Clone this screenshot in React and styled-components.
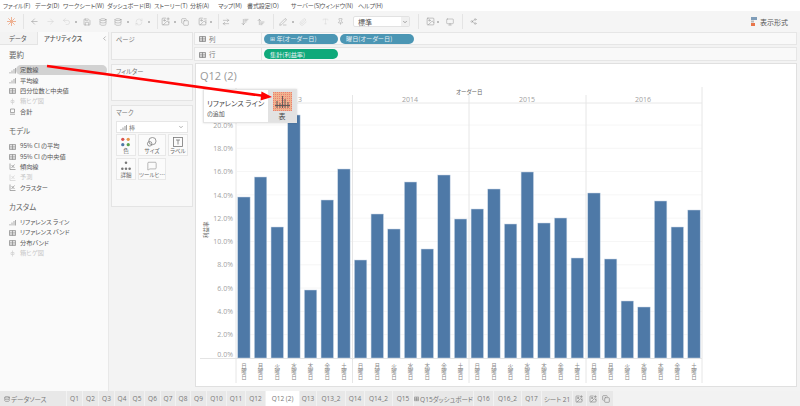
import React from 'react'
import styled, { createGlobalStyle } from 'styled-components'
import {
  ArrowLeft, ArrowRight, Undo2, Save, Database, RefreshCw, ImagePlus, Copy, ImageMinus,
  ArrowRightLeft, ArrowDownWideNarrow, ArrowUpWideNarrow, PenLine, Paperclip, Type, Pin,
  Image, Monitor, Share2, MessageSquare, ChevronLeft, ChevronDown,
} from 'lucide-react'

const menus = ['ファイル(F)', 'データ(D)', 'ワークシート(W)', 'ダッシュボード(B)', 'ストーリー(T)', '分析(A)', 'マップ(M)', '書式設定(O)', 'サーバー(S)', 'ウィンドウ(N)', 'ヘルプ(H)']
const menuLefts = [3, 35, 63, 107, 154, 190, 218, 247, 291, 320, 358]

const tools = [
  { kind: 'logo', c: 11, w: 9 }, { kind: 'sep', c: 23, w: 1 },
  { I: ArrowLeft, c: 34, w: 9 }, { I: ArrowRight, c: 50, w: 9, pale: true }, { I: Undo2, c: 66, w: 9, pale: true },
  { kind: 'dot', c: 76, w: 2 }, { I: Save, c: 87, w: 8 }, { I: Database, c: 103, w: 8 }, { I: Database, c: 118, w: 8 },
  { kind: 'dot', c: 128, w: 2 }, { I: RefreshCw, c: 139, w: 8, pale: true }, { kind: 'dot', c: 149, w: 2 },
  { kind: 'sep', c: 157, w: 1 }, { I: ImagePlus, c: 165, w: 9 }, { kind: 'dot', c: 175, w: 2 }, { I: Copy, c: 185, w: 8 },
  { I: ImageMinus, c: 202, w: 9 }, { kind: 'dot', c: 211, w: 2 }, { kind: 'sep', c: 218, w: 1 },
  { I: ArrowRightLeft, c: 226, w: 8 }, { I: ArrowDownWideNarrow, c: 245, w: 8 }, { I: ArrowUpWideNarrow, c: 261, w: 8 },
  { kind: 'sep', c: 273, w: 1 }, { I: PenLine, c: 283, w: 8 }, { kind: 'dot', c: 293, w: 2 },
  { I: Paperclip, c: 303, w: 8, pale: true }, { I: Type, c: 325, w: 7, pale: true }, { I: Pin, c: 340, w: 7 },
]
const tools2 = [
  { kind: 'sep', c: 418, w: 1 }, { I: Image, c: 430, w: 9 }, { kind: 'dot', c: 438, w: 2 }, { I: Monitor, c: 450, w: 8 },
  { kind: 'sep', c: 462, w: 1 }, { I: Share2, c: 473, w: 7 },
]

const summary = [['bars', '定数線', 'on'], ['bars', '平均線'], ['grid', '四分位数と中央値'], ['box', '箱ヒゲ図', 'off'], ['sum', '合計']]
const model = [['grid', '95% CI の平均'], ['grid', '95% CI の中央値'], ['trend', '傾向線'], ['trend', '予測', 'off'], ['trend', 'クラスター']]
const custom = [['bars', 'リファレンス ライン'], ['grid', 'リファレンス バンド'], ['grid', '分布バンド'], ['box', '箱ヒゲ図', 'off']]

const tabs = [['データソース', 67, 'db'], ['Q1', 16], ['Q2', 16], ['Q3', 16], ['Q4', 15], ['Q5', 15], ['Q6', 16], ['Q7', 15], ['Q8', 15], ['Q9', 16], ['Q10', 20], ['Q11', 19], ['Q12', 20], ['Q12 (2)', 34], ['Q13', 17], ['Q13_2', 29], ['Q14', 19], ['Q14_2', 28], ['Q15', 21], ['Q15ダッシュボード', 60, 'dash'], ['Q16', 20], ['Q16_2', 28], ['Q17', 20], ['シート 21', 31]]

const barTops = [197, 177, 227, 115, 290, 200, 169, 260, 214, 229, 182, 249, 175, 219, 209, 189, 224, 172, 223, 218, 258, 193, 259, 301, 307, 201, 227, 210]
const days = ['日曜日', '月曜日', '火曜日', '水曜日', '木曜日', '金曜日', '土曜日']
const zero = 358
const perPct = 11.65
const paneLines = [236, 352.5, 469, 586, 702]

export default function App() {
  return (
    <Page>
      <GlobalStyle />
      <MenuBar>
        {menus.map((m, i) => <MenuItem key={m} $w={(menuLefts[i + 1] || 400) - menuLefts[i]}>{m}</MenuItem>)}
      </MenuBar>
      <Toolbar>
        <ToolRun items={tools} start={0} />
        <Combo>標準<ComboBtn><ChevronDown size={6} /></ComboBtn></Combo>
        <ToolRun items={tools2} start={410} />
        <ShowMe>
          <svg width="7" height="9" viewBox="0 0 7 9"><rect width="6" height="3" fill="#7f9db9" /><rect y="3.5" width="3" height="2" fill="#bbb" /><rect y="6" width="4" height="3" fill="#e8764b" /></svg>
          表示形式
        </ShowMe>
      </Toolbar>
      <Main>
        <SidePane>
          <PaneTabs>
            <PaneTab>データ</PaneTab>
            <PaneTab $active>アナリティクス<ChevronLeft size={7} color="#888" /></PaneTab>
          </PaneTabs>
          <ListSection title="要約" rows={summary} first />
          <ListSection title="モデル" rows={model} />
          <ListSection title="カスタム" rows={custom} />
        </SidePane>
        <MidColumn>
          <Card $h={28}><CardTitle>ページ</CardTitle></Card>
          <Card $h={37}><CardTitle>フィルター</CardTitle></Card>
          <Card $h={102}>
            <CardTitle>マーク</CardTitle>
            <MarkSelect>
              <span><MiniIcon kind="bars" /> 棒</span>
              <ChevronDown size={6} color="#666" />
            </MarkSelect>
            <MarkGrid>
              <MarkButton>
                <svg width="11" height="11" viewBox="0 0 11 11">
                  <circle cx="2.5" cy="2.5" r="1.8" fill="#d9534f" /><circle cx="8.5" cy="2.5" r="1.8" fill="#e8964b" />
                  <circle cx="2.5" cy="8.5" r="1.8" fill="#4e79a7" /><circle cx="8.5" cy="8.5" r="1.8" fill="#59a14f" />
                </svg>
                色
              </MarkButton>
              <MarkButton>
                <svg width="11" height="11" viewBox="0 0 11 11" fill="none" stroke="#777" strokeWidth=".8">
                  <circle cx="6.5" cy="4.5" r="4" /><circle cx="3.5" cy="7.5" r="2.5" />
                </svg>
                サイズ
              </MarkButton>
              <MarkButton>
                <svg width="10" height="10" viewBox="0 0 10 10" fill="none" stroke="#777" strokeWidth=".8">
                  <rect x=".5" y=".5" width="9" height="9" /><path d="M3 3h4M5 3v4.5" />
                </svg>
                ラベル
              </MarkButton>
              <MarkButton>
                <svg width="12" height="11" viewBox="0 0 12 11" fill="#777">
                  <circle cx="6" cy="2" r="1.4" /><circle cx="2" cy="8.5" r="1.4" /><circle cx="6" cy="8.5" r="1.4" /><circle cx="10" cy="8.5" r="1.4" />
                </svg>
                詳細
              </MarkButton>
              <MarkButton>
                <MessageSquare size={10} color="#777" strokeWidth={1.2} />
                ツールヒ…
              </MarkButton>
            </MarkGrid>
          </Card>
        </MidColumn>
        <ViewColumn>
          <Shelf $h={13}>
            <ShelfLabel><MiniIcon kind="grid" /> 列</ShelfLabel>
            <Pill $c="#4b96b4">⊞ 年(オーダー日)</Pill>
            <Pill $c="#4b96b4">曜日(オーダー日)</Pill>
          </Shelf>
          <Shelf $h={14}>
            <ShelfLabel><MiniIcon kind="grid" /> 行</ShelfLabel>
            <Pill $c="#0fa97a">集計(利益率)</Pill>
          </Shelf>
          <ChartCard>
            <ChartTitle>Q12 (2)</ChartTitle>
            <Chart />
            <Popover>
              <PopoverText>
                <strong>リファレンス ライン</strong>
                <small>の追加</small>
              </PopoverText>
              <PopoverSide>
                <RefIcon />
                表
              </PopoverSide>
            </Popover>
          </ChartCard>
        </ViewColumn>
      </Main>
      <TabBar>
        {tabs.map(([t, w, icon]) => (
          <SheetTab key={t} $w={w} $active={t === 'Q12 (2)'} $lead={t === 'データソース'}>
            {icon === 'db' && <Database size={6} color="#777" />}
            {icon === 'dash' && <MiniIcon kind="grid" />}
            {t}
          </SheetTab>
        ))}
        <TabAdd><ImagePlus size={8} /></TabAdd>
        <TabAdd><ImagePlus size={8} /></TabAdd>
        <TabAdd><Copy size={8} /></TabAdd>
      </TabBar>
      <ArrowLayer width="800" height="406" viewBox="0 0 800 406">
        <line x1="47" y1="66" x2="263" y2="95.8" stroke="#f00" strokeWidth="2.6" />
        <polygon points="272,97 261.5,91.5 260.5,100.5" fill="#f00" />
      </ArrowLayer>
    </Page>
  )
}

const ToolRun = ({ items, start }) => (
  <>
    {items.map((t, i) => {
      const prev = items[i - 1]
      const left = t.c - t.w / 2 - (prev ? prev.c + prev.w / 2 : start)
      if (t.kind === 'sep') return <ToolSep key={i} $ml={left} />
      if (t.kind === 'dot') return <ToolDot key={i} $ml={left} />
      if (t.kind === 'logo') {
        return (
          <ToolSlot key={i} $ml={left} $w={t.w}>
            <svg width="9" height="9" viewBox="0 0 10 10" stroke="#eeb193" strokeWidth="1.1">
              <path d="M5 0v10M0 5h10M1.5 1.5l7 7M8.5 1.5l-7 7" />
            </svg>
          </ToolSlot>
        )
      }
      return (
        <ToolSlot key={i} $ml={left} $w={t.w} $pale={t.pale}>
          <t.I size={t.w} strokeWidth={1.3} />
        </ToolSlot>
      )
    })}
  </>
)

const ListSection = ({ title, rows, first }) => (
  <Section $first={first}>
    <SectionTitle>{title}</SectionTitle>
    {rows.map(([icon, label, state]) => (
      <ListRow key={label} $off={state === 'off'}>
        <MiniIcon kind={icon} />
        <ListLabel $on={state === 'on'} $off={state === 'off'}>{label}</ListLabel>
      </ListRow>
    ))}
  </Section>
)

const MiniIcon = ({ kind }) => {
  const shapes = {
    bars: <path d="M1 6.5V5M3 6.5V3.5M5 6.5V2M6.5 1v5.5" />,
    grid: <path d="M.5 1.5h6v5h-6zM.5 3.2h6M.5 5h6M3.5 1.5v5" />,
    box: <path d="M3.5 .5v6M2 2.5h3v2H2z" />,
    sum: <path d="M1.5 1h4v3.5h-4zM1 6.2h5" />,
    trend: <path d="M1 .5v6h5.5M2.5 5l3-3.5M2.5 2l3 3" />,
  }
  return (
    <svg width="7" height="7" viewBox="0 0 7 7" fill="none" stroke="currentColor" strokeWidth=".7">
      {shapes[kind]}
    </svg>
  )
}

const Chart = () => (
  <PlotSvg width="602" height="300" viewBox="195 86 602 300">
    {[2, 4, 6, 8, 10, 12, 14, 16, 18, 20].map(p => (
      <line key={p} x1="237" x2="702" y1={zero - p * perPct} y2={zero - p * perPct} stroke="#f6f6f6" strokeWidth="1" />
    ))}
    <line x1="236" x2="702" y1="103" y2="103" stroke="#e8e8e8" strokeWidth="1" />
    <line x1="200" x2="702" y1="358.5" y2="358.5" stroke="#e4e4e4" strokeWidth="1" />
    {paneLines.map((x, i) => (
      <line key={x} x1={x} x2={x} y1={i === 4 ? 87 : i === 0 ? 88 : 95} y2="383" stroke="#e6e6e6" strokeWidth="1" />
    ))}
    {barTops.map((top, i) => (
      <rect key={i} x={237.7 + 16.67 * i} y={top} width="12.4" height={zero - top} fill="#4e79a7" stroke="#c9d7e6" strokeWidth=".5" />
    ))}
    {[0, 2, 4, 6, 8, 10, 12, 14, 16, 18, 20].map(p => (
      <AxisText key={p} x="233" y={(p === 0 ? 354 : zero - p * perPct) + 2.6} textAnchor="end">{p}.0%</AxisText>
    ))}
    {[[294, 2013], [410, 2014], [527, 2015], [643, 2016]].map(([x, y]) => (
      <AxisText key={y} x={x} y="102" textAnchor="middle">{y}</AxisText>
    ))}
    <FieldText x="456" y="93.5">オーダー日</FieldText>
    <FieldText x="0" y="0" transform="translate(208 238) rotate(-90)">利益率</FieldText>
    {barTops.map((_, i) => (
      <DayText key={i} x={243.9 + 16.67 * i} y="363">{days[i % 7]}</DayText>
    ))}
  </PlotSvg>
)

const RefIcon = () => (
  <svg width="19" height="19" viewBox="0 0 19 19">
    <defs>
      <pattern id="speck" width="2" height="2" patternUnits="userSpaceOnUse">
        <rect width="2" height="2" fill="#efb48e" />
        <rect width="1" height="1" fill="#ec7f72" />
      </pattern>
    </defs>
    <rect width="19" height="19" fill="url(#speck)" />
    <path d="M2 13.5h15M4 9v7M7 11v5M9.5 4v12M12 7v9M15 10v6" stroke="#555" strokeWidth=".9" fill="none" />
  </svg>
)

const GlobalStyle = createGlobalStyle`
  html, body { margin: 0; padding: 0; background: #f3f3f3; }
  body {
    font-family: "Noto Sans CJK JP", "Open Sans", sans-serif;
    font-feature-settings: "palt";
    color: #555;
  }
`

const Page = styled.div`
  position: relative;
  width: 800px;
  height: 406px;
  display: flex;
  flex-direction: column;
  overflow: hidden;
  background: #f3f3f3;
`

const MenuBar = styled.div`
  height: 11px;
  flex: none;
  display: flex;
  padding-left: 3px;
  background: #fff;
`

const MenuItem = styled.div`
  width: ${p => p.$w}px;
  font-size: 6px;
  letter-spacing: -.1px;
  line-height: 12px;
  white-space: nowrap;
  color: #555;
`

const Toolbar = styled.div`
  height: 21px;
  flex: none;
  display: flex;
  align-items: center;
  background: #f5f5f5;
`

const ToolSlot = styled.div`
  width: ${p => p.$w}px;
  height: 10px;
  margin-left: ${p => p.$ml}px;
  display: flex;
  align-items: center;
  justify-content: center;
  flex: none;
  color: ${p => (p.$pale ? '#cfcfcf' : '#8a8a8a')};
`

const ToolSep = styled.div`
  width: 1px;
  height: 15px;
  margin-left: ${p => p.$ml}px;
  flex: none;
  background: #e4e4e4;
`

const ToolDot = styled.div`
  width: 2px;
  height: 2px;
  margin-left: ${p => p.$ml}px;
  flex: none;
  border-radius: 50%;
  background: #aaa;
`

const Combo = styled.div`
  width: 57px;
  height: 11px;
  margin-left: 9.5px;
  flex: none;
  display: flex;
  align-items: center;
  justify-content: space-between;
  box-sizing: border-box;
  padding-left: 4px;
  font-size: 7px;
  background: #fff;
  border: 1px solid #e2e2e2;
  border-radius: 2px;
`

const ComboBtn = styled.span`
  width: 8px;
  height: 100%;
  display: flex;
  align-items: center;
  justify-content: center;
  background: #f0f0f0;
`

const ShowMe = styled.div`
  margin-left: auto;
  margin-right: 12px;
  display: flex;
  align-items: center;
  gap: 2px;
  font-size: 7px;
  color: #555;
`

const Main = styled.div`
  flex: 1;
  min-height: 0;
  display: flex;
`

const SidePane = styled.div`
  width: 108px;
  flex: none;
  background: #fafafa;
  border-right: 1px solid #e8e8e8;
`

const PaneTabs = styled.div`
  display: flex;
  height: 13px;
`

const PaneTab = styled.div`
  width: ${p => (p.$active ? 70 : 38)}px;
  display: flex;
  align-items: center;
  justify-content: ${p => (p.$active ? 'space-between' : 'flex-start')};
  box-sizing: border-box;
  padding: 0 0 0 ${p => (p.$active ? 6 : 9)}px;
  font-size: 6.3px;
  color: #555;
  font-weight: ${p => (p.$active ? 500 : 400)};
  background: ${p => (p.$active ? '#fafafa' : '#f3f3f3')};
  border-bottom: ${p => (p.$active ? 'none' : '1px solid #e4e4e4')};
  border-right: ${p => (p.$active ? 'none' : '1px solid #e4e4e4')};
`

const Section = styled.div`
  padding-top: ${p => (p.$first ? 4 : 0)}px;
  margin-bottom: 8px;
`

const SectionTitle = styled.div`
  height: 12px;
  margin-bottom: 4px;
  padding-left: 9px;
  font-size: 7.5px;
  line-height: 12px;
  color: #666;
`

const ListRow = styled.div`
  height: 10.4px;
  display: flex;
  align-items: center;
  padding: 0 1px 0 9px;
  color: ${p => (p.$off ? '#d0d0d0' : '#888')};
`

const ListLabel = styled.span`
  flex: 1;
  height: 10px;
  padding-left: 4px;
  font-size: 6.2px;
  line-height: 10px;
  white-space: nowrap;
  color: ${p => (p.$off ? '#c8c8c8' : '#555')};
  background: ${p => (p.$on ? '#d2d2d2' : 'transparent')};
  border-radius: 5px;
`

const MidColumn = styled.div`
  width: 82px;
  flex: none;
  margin: 0 1px 0 2px;
  display: flex;
  flex-direction: column;
  gap: 4px;
`

const Card = styled.div`
  height: ${p => p.$h}px;
  box-sizing: border-box;
  padding: 2px 4px;
  background: #f8f8f8;
  border: 1px solid #e4e4e4;
`

const CardTitle = styled.div`
  font-size: 6.3px;
  line-height: 10px;
  color: #777;
`

const MarkSelect = styled.div`
  height: 10px;
  margin-top: 3px;
  display: flex;
  align-items: center;
  justify-content: space-between;
  padding: 0 3px;
  font-size: 6px;
  color: #777;
  background: #fff;
  border: 1px solid #e6e6e6;
  span { display: flex; align-items: center; gap: 2px; }
`

const MarkGrid = styled.div`
  margin-top: 1px;
  display: grid;
  grid-template-columns: repeat(3, 1fr);
  gap: 2px;
`

const MarkButton = styled.div`
  height: 22px;
  box-sizing: border-box;
  padding-top: 2px;
  display: flex;
  flex-direction: column;
  align-items: center;
  justify-content: space-between;
  font-size: 5.5px;
  line-height: 8px;
  white-space: nowrap;
  color: #666;
  background: #fbfbfb;
  border: 1px solid #e8e8e8;
`

const ViewColumn = styled.div`
  flex: 1;
  min-width: 0;
  margin: 0 3px 4px 0;
  display: flex;
  flex-direction: column;
  gap: 2px;
`

const Shelf = styled.div`
  height: ${p => p.$h}px;
  flex: none;
  box-sizing: border-box;
  display: flex;
  align-items: center;
  gap: 2px;
  background: #f9f9f9;
  border: 1px solid #e6e6e6;
`

const ShelfLabel = styled.div`
  width: 67px;
  height: 100%;
  display: flex;
  align-items: center;
  gap: 3px;
  padding-left: 4px;
  box-sizing: border-box;
  font-size: 6.5px;
  color: #777;
  border-right: 1px solid #e6e6e6;
`

const Pill = styled.div`
  width: 74px;
  height: 10px;
  display: flex;
  align-items: center;
  padding-left: 6px;
  box-sizing: border-box;
  font-size: 6.2px;
  white-space: nowrap;
  color: #e4f0f4;
  background: ${p => p.$c};
  border-radius: 5px;
`

const ChartCard = styled.div`
  position: relative;
  flex: 1;
  margin-left: 1px;
  min-height: 0;
  background: #fff;
  border: 1px solid #e0e0e0;
  box-sizing: border-box;
`

const ChartTitle = styled.div`
  height: 22px;
  padding-left: 4px;
  font-family: "Open Sans", sans-serif;
  font-size: 11px;
  line-height: 24px;
  color: #999;
`

const PlotSvg = styled.svg`
  display: block;
  margin-left: -1px;
`

const AxisText = styled.text`
  font-family: "Open Sans", sans-serif;
  font-size: 7px;
  fill: #a2a2a2;
`

const FieldText = styled.text`
  font-size: 5.5px;
  fill: #666;
`

const DayText = styled.text`
  font-size: 5.5px;
  fill: #888;
  writing-mode: vertical-rl;
`

const Popover = styled.div`
  position: absolute;
  left: 7px;
  top: 25px;
  width: 94px;
  height: 34px;
  display: flex;
  background: #fff;
  border: 1px solid #e4e4e4;
  box-sizing: border-box;
  box-shadow: 0 0 2px rgba(0, 0, 0, .15);
`

const PopoverText = styled.div`
  flex: 1;
  padding: 8px 0 0 3px;
  display: flex;
  flex-direction: column;
  strong { font-size: 7.2px; line-height: 11px; font-weight: 400; color: #444; white-space: nowrap; }
  small { font-size: 6px; line-height: 9px; color: #555; }
`

const PopoverSide = styled.div`
  width: 28px;
  flex: none;
  padding-top: 2px;
  display: flex;
  flex-direction: column;
  align-items: center;
  font-size: 7px;
  line-height: 10px;
  color: #444;
  background: #e2e2e2;
`

const TabBar = styled.div`
  height: 15px;
  flex: none;
  display: flex;
  gap: 1px;
  background: #f2f2f2;
`

const SheetTab = styled.div`
  width: ${p => p.$w - 1}px;
  flex: none;
  display: flex;
  align-items: center;
  justify-content: ${p => (p.$lead ? 'flex-start' : 'center')};
  gap: 1px;
  padding-left: ${p => (p.$lead ? 4 : 0)}px;
  box-sizing: border-box;
  font-family: "Open Sans", "Noto Sans CJK JP", sans-serif;
  font-size: 6.5px;
  white-space: nowrap;
  color: #777;
  background: ${p => (p.$active ? '#fff' : '#e8e8e8')};
`

const TabAdd = styled.div`
  width: 12.5px;
  flex: none;
  display: flex;
  align-items: center;
  justify-content: center;
  color: #888;
  background: #e8e8e8;
`

const ArrowLayer = styled.svg`
  position: absolute;
  left: 0;
  top: 0;
  pointer-events: none;
`
